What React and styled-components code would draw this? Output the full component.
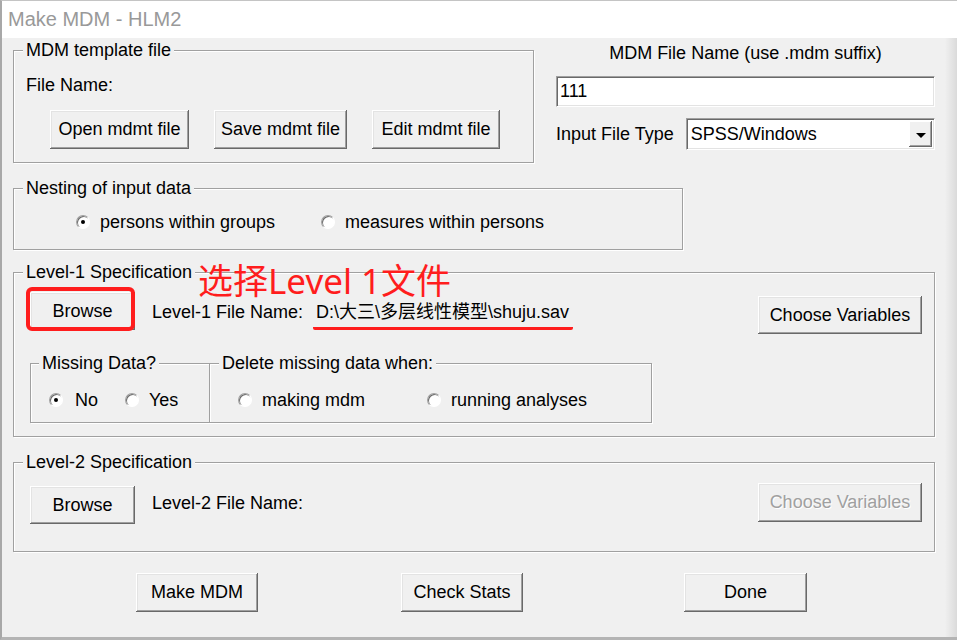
import React from "react";
import styled, { createGlobalStyle } from "styled-components";

const GlobalStyle = createGlobalStyle`
  html, body {
    margin: 0;
    padding: 0;
    background: #fff;
  }
  body {
    font-family: "Liberation Sans", Arial, "Noto Sans CJK SC", sans-serif;
    font-size: 18px;
    color: #000;
  }
`;

const Window = styled.div`
  position: relative;
  width: 957px;
  height: 640px;
  box-sizing: border-box;
  display: flex;
  flex-direction: column;
  border-top: 1px solid #c4c4c4;
  border-left: 2px solid #a8a8a8;
  border-bottom: 3px solid #b4b4b4;
  background: #f0f0f0;
  overflow: hidden;
  &::after {
    content: "";
    position: absolute;
    top: 37px;
    right: 0;
    bottom: 0;
    width: 12px;
    background: linear-gradient(to right, rgba(0, 0, 0, 0), rgba(0, 0, 0, 0.09));
  }
`;

const TitleBar = styled.div`
  height: 37px;
  line-height: 37px;
  padding-left: 6px;
  background: #fff;
  color: #999;
  font-size: 20px;
`;

const Body = styled.div`
  flex: 1;
  display: flex;
  flex-direction: column;
  padding: 2px 0 0 11px;
`;

const TopRow = styled.div`
  display: flex;
  align-items: flex-start;
`;

const Group = styled.fieldset`
  position: relative;
  margin: ${p => p.$mt || 0}px 0 0 ${p => p.$ml || 0}px;
  padding: 0;
  min-width: 0;
  box-sizing: border-box;
  width: ${p => p.$w}px;
  height: ${p => p.$h}px;
  border: 1px solid #a0a0a0;
  box-shadow: 1px 1px 0 #fff, inset 1px 1px 0 #fff;
`;

const Legend = styled.legend`
  margin-left: ${p => p.$ml || 9}px;
  padding: 0 3px;
  line-height: 20px;
  background: #f0f0f0;
`;

const Inner = styled.div`
  padding: ${p => p.$pad};
`;

const Label = styled.div`
  line-height: 20px;
  margin-top: ${p => p.$mt || 0}px;
  margin-left: ${p => p.$ml || 0}px;
  white-space: nowrap;
`;

const ButtonRow = styled.div`
  display: flex;
  align-items: flex-start;
  gap: ${p => p.$gap || 0}px;
  margin: ${p => p.$m || 0};
`;

const Button = styled.button`
  box-sizing: border-box;
  flex: none;
  width: ${p => p.$w}px;
  height: ${p => p.$h || 38}px;
  margin: ${p => p.$mt || 0}px 0 0 ${p => p.$ml || 0}px;
  padding: 0;
  border: none;
  background: #f0f0f0;
  font-family: inherit;
  font-size: 18px;
  color: ${p => (p.disabled ? "#a0a0a0" : "#000")};
  text-shadow: ${p => (p.disabled ? "1px 1px 0 #fff" : "none")};
  box-shadow: inset -1px -1px 0 #696969, inset 1px 1px 0 #fff,
    inset -2px -2px 0 #a0a0a0, inset 2px 2px 0 #e3e3e3;
`;

const RightPanel = styled.div`
  width: 379px;
  margin-left: 22px;
  display: flex;
  flex-direction: column;
`;

const Caption = styled.div`
  text-align: center;
  line-height: 21px;
  margin-top: 3px;
`;

const TextBox = styled.div`
  box-sizing: border-box;
  height: ${p => p.$h || 31}px;
  margin-top: ${p => p.$mt || 0}px;
  padding-left: 3px;
  display: flex;
  align-items: center;
  background: #fff;
  border: 1px solid;
  border-color: #a0a0a0 #fff #fff #a0a0a0;
  box-shadow: inset 1px 1px 0 #696969, inset -1px -1px 0 #e3e3e3;
`;

const FieldRow = styled.div`
  display: flex;
  align-items: center;
  margin-top: 11px;
`;

const Select = styled(TextBox)`
  flex: 1;
  margin-left: 12px;
  padding-left: 4px;
  padding-right: 2px;
  justify-content: space-between;
`;

const ArrowButton = styled.span`
  width: 23px;
  height: 26px;
  background: #f0f0f0;
  display: flex;
  align-items: center;
  justify-content: center;
  box-shadow: inset -1px -1px 0 #696969, inset 1px 1px 0 #fff,
    inset -2px -2px 0 #a0a0a0;
  &::after {
    content: "";
    border-left: 5px solid transparent;
    border-right: 5px solid transparent;
    border-top: 5px solid #000;
    margin-top: 2px;
  }
`;

const RadioRow = styled.div`
  display: flex;
  align-items: center;
  height: 20px;
`;

const RadioItem = styled.label`
  display: flex;
  align-items: center;
  gap: ${p => p.$gap || 12}px;
  width: ${p => p.$w}px;
  flex: none;
  line-height: 20px;
  white-space: nowrap;
`;

const RadioDot = styled.span`
  width: 14px;
  height: 14px;
  flex: none;
  box-sizing: border-box;
  border-radius: 50%;
  background: #fff;
  border: 1px solid;
  border-color: #a0a0a0 #fff #fff #a0a0a0;
  box-shadow: inset 1px 1px 0 #696969;
  display: flex;
  align-items: center;
  justify-content: center;
  &::after {
    content: "";
    width: 4px;
    height: 4px;
    border-radius: 50%;
    background: ${p => (p.$on ? "#000" : "transparent")};
  }
`;

const SpecRow = styled.div`
  display: flex;
  align-items: flex-start;
`;

const Highlight = styled.div`
  position: relative;
  flex: none;
  &::after {
    content: "";
    position: absolute;
    left: -4px;
    top: -5px;
    width: 109px;
    height: 44px;
    box-sizing: border-box;
    border: 4px solid #ff1d1d;
    border-radius: 6px;
  }
`;

const PathText = styled.span`
  margin: 10px 0 0 10px;
  padding: 0 4px 5px 3px;
  line-height: 20px;
  border-bottom: 3px solid #ff1d1d;
  border-radius: 0 0 2px 2px;
  white-space: nowrap;
`;

const Note = styled.div`
  position: absolute;
  left: 184px;
  top: -21px;
  font-family: "Noto Sans", "Noto Sans CJK SC", sans-serif;
  font-size: 35px;
  line-height: 40px;
  color: #ff1d1d;
  white-space: nowrap;
`;

const Spacer = styled.div`
  flex: 1;
`;

const SubRow = styled.div`
  display: flex;
  margin-top: 19px;
`;

const Footer = styled.div`
  display: flex;
  margin-top: 21px;
`;

function Radio({ on, w, gap, children }) {
  return (
    <RadioItem $w={w} $gap={gap}>
      <RadioDot $on={on} />
      {children}
    </RadioItem>
  );
}

export default function App() {
  return (
    <>
      <GlobalStyle />
      <Window>
        <TitleBar>Make MDM - HLM2</TitleBar>
        <Body>
          <TopRow>
            <Group $w={521} $h={123}>
              <Legend>MDM template file</Legend>
              <Inner $pad="15px 0 0 12px">
                <Label>File Name:</Label>
                <ButtonRow $gap={25} $m="15px 0 0 24px">
                  <Button $w={139} $h={39}>Open mdmt file</Button>
                  <Button $w={133} $h={39}>Save mdmt file</Button>
                  <Button $w={128} $h={39}>Edit mdmt file</Button>
                </ButtonRow>
              </Inner>
            </Group>
            <RightPanel>
              <Caption>MDM File Name (use .mdm suffix)</Caption>
              <TextBox $mt={12}>111</TextBox>
              <FieldRow>
                <Label>Input File Type</Label>
                <Select $h={32}>
                  SPSS/Windows
                  <ArrowButton />
                </Select>
              </FieldRow>
            </RightPanel>
          </TopRow>

          <Group $w={670} $h={72} $mt={15}>
            <Legend>Nesting of input data</Legend>
            <Inner $pad="14px 0 0 62px">
              <RadioRow>
                <Radio on w={245} gap={10}>persons within groups</Radio>
                <Radio w={260} gap={10}>measures within persons</Radio>
              </RadioRow>
            </Inner>
          </Group>

          <Group $w={922} $h={175} $mt={12}>
            <Legend>Level-1 Specification</Legend>
            <Note>选择Level 1文件</Note>
            <Inner $pad="10px 12px 0 16px">
              <SpecRow>
                <Highlight>
                  <Button $w={105}>Browse</Button>
                </Highlight>
                <Label $mt={10} $ml={17}>Level-1 File Name:</Label>
                <PathText>D:\大三\多层线性模型\shuju.sav</PathText>
                <Spacer />
                <Button $w={164} $mt={4}>Choose Variables</Button>
              </SpecRow>
              <SubRow>
                <Group $w={180} $h={70}>
                  <Legend $ml={8}>Missing Data?</Legend>
                  <Inner $pad="17px 0 0 18px">
                    <RadioRow>
                      <Radio on w={76}>No</Radio>
                      <Radio w={70} gap={10}>Yes</Radio>
                    </RadioRow>
                  </Inner>
                </Group>
                <Group $w={443} $h={70} $ml={-1}>
                  <Legend>Delete missing data when:</Legend>
                  <Inner $pad="17px 0 0 28px">
                    <RadioRow>
                      <Radio w={189} gap={10}>making mdm</Radio>
                      <Radio w={200} gap={10}>running analyses</Radio>
                    </RadioRow>
                  </Inner>
                </Group>
              </SubRow>
            </Inner>
          </Group>

          <Group $w={922} $h={100} $mt={15}>
            <Legend>Level-2 Specification</Legend>
            <Inner $pad="11px 12px 0 16px">
              <SpecRow>
                <Button $w={105} $mt={3}>Browse</Button>
                <Label $mt={10} $ml={17}>Level-2 File Name:</Label>
                <Spacer />
                <Button $w={164} $h={39} disabled>Choose Variables</Button>
              </SpecRow>
            </Inner>
          </Group>

          <Footer>
            <Button $w={122} $h={39} $ml={123}>Make MDM</Button>
            <Button $w={122} $h={39} $ml={143}>Check Stats</Button>
            <Button $w={123} $h={39} $ml={161}>Done</Button>
          </Footer>
        </Body>
      </Window>
    </>
  );
}
